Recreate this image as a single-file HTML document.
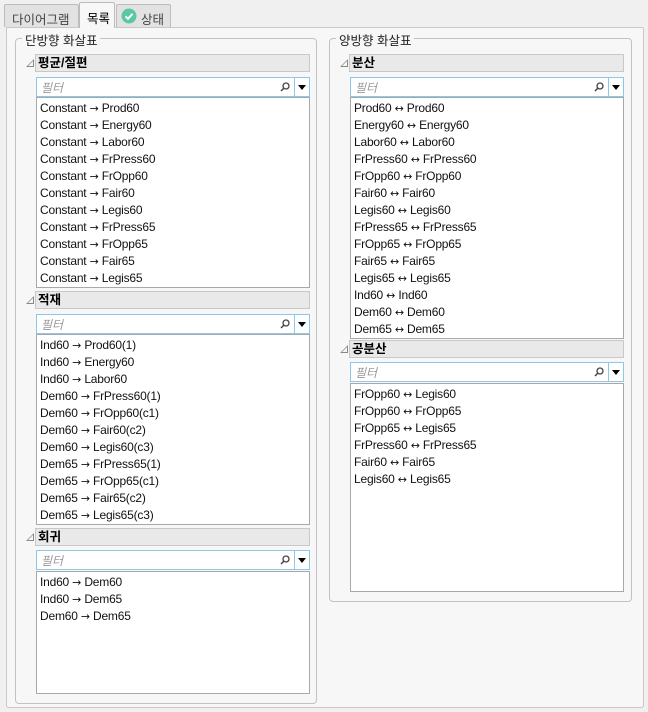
<!DOCTYPE html>
<html><head><meta charset="utf-8"><style>
*{box-sizing:border-box;margin:0;padding:0}
body{width:648px;height:712px;background:#f0f0f0;font-family:"Liberation Sans","Noto Sans CJK KR",sans-serif;font-size:12px;color:#000;position:relative;overflow:hidden}
.a{position:absolute}
.tab{position:absolute;top:4px;height:23px;border:1px solid #bcbcbc;border-bottom:none;background:#e2e2e2;font-size:12.5px;color:#444;padding:4px 0 0 7px;border-radius:2px 2px 0 0}
.panel{position:absolute;left:6px;top:27px;width:638px;height:681px;border:1px solid #c8c8c8;background:#f7f7f7;border-radius:0 2px 3px 3px}
.grp{position:absolute;border:1px solid #c2c2c2;border-radius:4px}
.gl{position:absolute;top:-9px;left:6px;background:#f7f7f7;padding:0 3px;font-size:12.5px;color:#222}
.hd{position:absolute;height:18px;background:#e9e9e9;border:1px solid #c8c8c8;font-weight:bold;font-size:12.5px;padding:0 0 0 2px;line-height:16px}
.tri{position:absolute;width:0;height:0;border-left:8px solid transparent;border-bottom:8px solid #888}
.tri:after{content:"";position:absolute;left:-6px;top:2px;border-left:5px solid transparent;border-bottom:5px solid #f7f7f7}
.flt{position:absolute;height:20px;border:1px solid #8cc8ea;background:#fff;font-style:italic;color:#999;font-size:12px;padding:1px 0 0 4px}
.flt .dd{position:absolute;right:0;top:0;width:15px;height:18px;border-left:1px solid #8cc8ea}
.flt .dd:after{content:"";position:absolute;left:3px;top:7px;border-left:4px solid transparent;border-right:4px solid transparent;border-top:5px solid #000}
.flt svg{position:absolute;right:19px;top:4px}
.lst{position:absolute;border:1px solid #a8a8a8;background:#fff;padding:2px 0 0 3px;font-size:12px;line-height:17px;color:#111;letter-spacing:-0.2px}
.lst i{font-style:normal;font-family:"DejaVu Sans",sans-serif;font-size:11px}
</style></head><body>
<div class="tab" style="left:4px;width:75px">다이어그램</div>
<div class="tab" style="left:116px;width:55px;padding-left:24px">상태
<svg class="a" style="left:4px;top:3px" width="16" height="16"><circle cx="8" cy="8" r="7.5" fill="#5ac8a0"/><path d="M4.5 8.3l2.5 2.5 4.5-5" stroke="#fff" stroke-width="2" fill="none"/></svg></div>
<div class="panel"></div>
<div class="tab" style="left:79px;top:2px;width:36px;height:26px;background:#f7f7f7;color:#000;z-index:2;padding-top:5px">목록</div>

<div class="grp" style="left:15px;top:38px;width:302px;height:666px"><div class="gl">단방향 화살표</div></div>
<div class="grp" style="left:329px;top:38px;width:303px;height:564px"><div class="gl">양방향 화살표</div></div>

<div class="tri" style="left:26px;top:59px"></div>
<div class="hd" style="left:35px;top:54px;width:275px">평균/절편</div>
<div class="flt" style="left:36px;top:77px;width:274px">필터<svg width="10" height="10"><circle cx="6" cy="4" r="3" stroke="#444" stroke-width="1.3" fill="none"/><path d="M4 6L1 9" stroke="#444" stroke-width="1.5"/></svg><div class="dd"></div></div>
<div class="lst" style="left:36px;top:97px;width:274px;height:191px">Constant <i>→</i> Prod60<br>Constant <i>→</i> Energy60<br>Constant <i>→</i> Labor60<br>Constant <i>→</i> FrPress60<br>Constant <i>→</i> FrOpp60<br>Constant <i>→</i> Fair60<br>Constant <i>→</i> Legis60<br>Constant <i>→</i> FrPress65<br>Constant <i>→</i> FrOpp65<br>Constant <i>→</i> Fair65<br>Constant <i>→</i> Legis65</div>

<div class="tri" style="left:26px;top:296px"></div>
<div class="hd" style="left:35px;top:291px;width:275px">적재</div>
<div class="flt" style="left:36px;top:314px;width:274px">필터<svg width="10" height="10"><circle cx="6" cy="4" r="3" stroke="#444" stroke-width="1.3" fill="none"/><path d="M4 6L1 9" stroke="#444" stroke-width="1.5"/></svg><div class="dd"></div></div>
<div class="lst" style="left:36px;top:334px;width:274px;height:191px">Ind60 <i>→</i> Prod60(1)<br>Ind60 <i>→</i> Energy60<br>Ind60 <i>→</i> Labor60<br>Dem60 <i>→</i> FrPress60(1)<br>Dem60 <i>→</i> FrOpp60(c1)<br>Dem60 <i>→</i> Fair60(c2)<br>Dem60 <i>→</i> Legis60(c3)<br>Dem65 <i>→</i> FrPress65(1)<br>Dem65 <i>→</i> FrOpp65(c1)<br>Dem65 <i>→</i> Fair65(c2)<br>Dem65 <i>→</i> Legis65(c3)</div>

<div class="tri" style="left:26px;top:533px"></div>
<div class="hd" style="left:35px;top:528px;width:275px">회귀</div>
<div class="flt" style="left:36px;top:550px;width:274px">필터<svg width="10" height="10"><circle cx="6" cy="4" r="3" stroke="#444" stroke-width="1.3" fill="none"/><path d="M4 6L1 9" stroke="#444" stroke-width="1.5"/></svg><div class="dd"></div></div>
<div class="lst" style="left:36px;top:571px;width:274px;height:123px">Ind60 <i>→</i> Dem60<br>Ind60 <i>→</i> Dem65<br>Dem60 <i>→</i> Dem65</div>

<div class="tri" style="left:340px;top:59px"></div>
<div class="hd" style="left:349px;top:54px;width:275px">분산</div>
<div class="flt" style="left:350px;top:77px;width:274px">필터<svg width="10" height="10"><circle cx="6" cy="4" r="3" stroke="#444" stroke-width="1.3" fill="none"/><path d="M4 6L1 9" stroke="#444" stroke-width="1.5"/></svg><div class="dd"></div></div>
<div class="lst" style="left:350px;top:97px;width:274px;height:242px">Prod60 <i>↔</i> Prod60<br>Energy60 <i>↔</i> Energy60<br>Labor60 <i>↔</i> Labor60<br>FrPress60 <i>↔</i> FrPress60<br>FrOpp60 <i>↔</i> FrOpp60<br>Fair60 <i>↔</i> Fair60<br>Legis60 <i>↔</i> Legis60<br>FrPress65 <i>↔</i> FrPress65<br>FrOpp65 <i>↔</i> FrOpp65<br>Fair65 <i>↔</i> Fair65<br>Legis65 <i>↔</i> Legis65<br>Ind60 <i>↔</i> Ind60<br>Dem60 <i>↔</i> Dem60<br>Dem65 <i>↔</i> Dem65</div>

<div class="tri" style="left:340px;top:345px"></div>
<div class="hd" style="left:349px;top:340px;width:275px">공분산</div>
<div class="flt" style="left:350px;top:362px;width:274px">필터<svg width="10" height="10"><circle cx="6" cy="4" r="3" stroke="#444" stroke-width="1.3" fill="none"/><path d="M4 6L1 9" stroke="#444" stroke-width="1.5"/></svg><div class="dd"></div></div>
<div class="lst" style="left:350px;top:383px;width:274px;height:209px">FrOpp60 <i>↔</i> Legis60<br>FrOpp60 <i>↔</i> FrOpp65<br>FrOpp65 <i>↔</i> Legis65<br>FrPress60 <i>↔</i> FrPress65<br>Fair60 <i>↔</i> Fair65<br>Legis60 <i>↔</i> Legis65</div>
</body></html>
